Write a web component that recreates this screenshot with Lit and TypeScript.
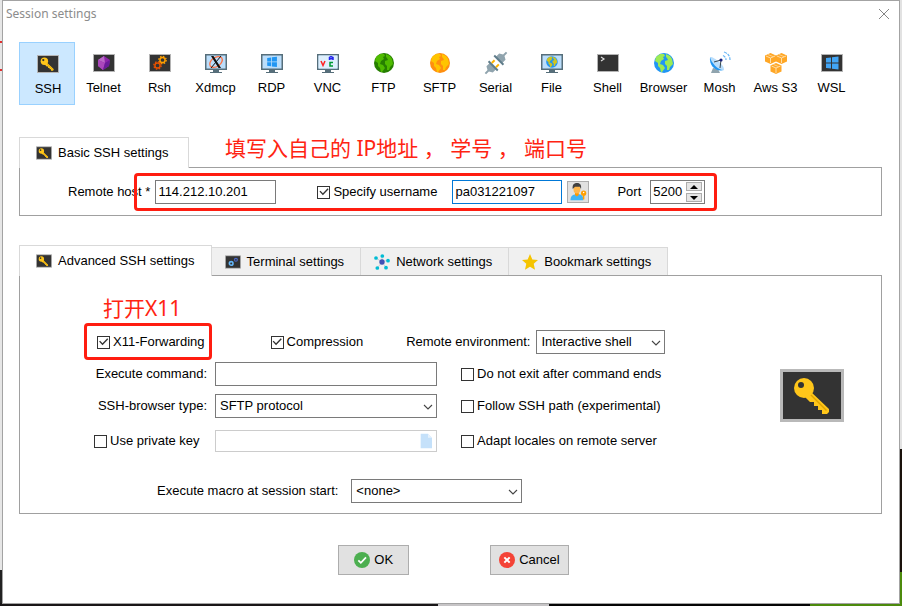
import { LitElement, html, css, svg } from "lit";
import { customElement, property, state } from "lit/decorators.js";
import { classMap } from "lit/directives/class-map.js";

const keyShape = svg`
  <path fill="#ffc61a" d="M29 21 L49 40 V43 L47 45 H42 V41 H38 V37 H34 V33 H30 L25 28 Z"/>
  <path fill="#e0a400" d="M30 24 L47 41 L46 42 L29 25 Z"/>
  <circle cx="24" cy="19" r="10" fill="#ffc61a"/>
  <circle cx="21" cy="16" r="3" fill="#333"/>`;

const tile = (inner: unknown) => svg`
  <rect x="1.5" y="3.5" width="21" height="17" fill="#333" stroke="#b4b4b4"/>${inner}`;

const monitor = (inner: unknown) => svg`
  <rect x="1" y="3" width="22" height="16" fill="#566e7a"/>
  <rect x="2.5" y="4.5" width="19" height="13" fill="#bbdefb"/>
  <path d="M9 19h6v2h3v1H6v-1h3z" fill="#566e7a"/>${inner}`;

const landmass = (fill: string) => svg`
  <path fill="${fill}" d="M4 6 L8 3 L12 3 L13 5 L11 6 L12 8 L9 10 L8 13 L11 14 L13 17 L10 21 L9 21 L8 17 L6 15 L6 12 L3 10 Z
  M14 3 L18 5 L20 8 L21 13 L18 16 L17 19 L15 19 L15 15 L13 13 L13 10 L16 9 L15 7 L14 6 Z"/>`;

const globe = (sea: string, land: string) => svg`
  <circle cx="12" cy="12" r="10" fill="${sea}"/>${landmass(land)}`;

const windowsLogo = (fill: string) => svg`
  <path fill="${fill}" d="M6 7 L11 6.400 V11.500 H6Z M12 6.200 L18.500 5.500 V11.500 H12Z M6 12.500 H11 V17.600 L6 17Z M12 12.500 H18.500 V18.500 L12 17.800Z"/>`;

const gear = (x: number, y: number, colour: string) => svg`
  <circle cx="${x}" cy="${y}" r="2.600" fill="none" stroke="${colour}" stroke-width="1.500"/>
  <circle cx="${x}" cy="${y}" r="3.700" fill="none" stroke="${colour}" stroke-width="1.300" stroke-dasharray="1.500 1.400"/>`;

const cube = (x: number, y: number) => svg`
  <g transform="translate(${x} ${y})">
    <path fill="#ffa726" d="M0 2.500 L5.500 0 L11 2.500 V8.500 L5.500 11 L0 8.500Z"/>
    <path fill="none" stroke="#ffe3b5" stroke-width="0.900" d="M1 3 L5.500 5 L10 3 M5.500 5 V10"/>
    <path fill="none" stroke="#ffe3b5" stroke-width="0.700" d="M3 1.500 L8 3.600"/>
  </g>`;

const icons: Record<string, unknown> = {
  ssh: tile(svg`<g transform="translate(-0.500 2.200) scale(0.370)">${keyShape}</g>`),
  telnet: tile(svg`
    <path fill="#8e24aa" d="M6 9 L12 5 L18 9 L17 15 L11 19 L6 15Z"/>
    <path fill="#ba68c8" d="M6 9 L12 5 L13 12Z"/>
    <path fill="#ab47bc" d="M6 9 L13 12 L11 19 L6 15Z"/>
    <path fill="#6a1b9a" d="M13 12 L18 9 L17 15 L11 19Z"/>`),
  rsh: tile(svg`${gear(14.5, 9, "#ffa000")}${gear(9.5, 14.5, "#e65100")}`),
  xdmcp: monitor(svg`
    <ellipse cx="12" cy="11" rx="7" ry="4.500" fill="none" stroke="#ff7043" stroke-width="1.300" transform="rotate(-35 12 11)"/>
    <path d="M7 5 H9.500 L17 17 H14.500Z" fill="#111"/>
    <path d="M17 5 L7 17" stroke="#111" stroke-width="1"/>`),
  rdp: monitor(svg`<g transform="translate(2.500 1.500) scale(0.780)">${windowsLogo("#2196f3")}</g>`),
  vnc: monitor(svg`
    <rect x="2.500" y="4.500" width="19" height="13" fill="#deeffd"/>
    <g fill="none" stroke-width="1.500">
      <path stroke="#f22" d="M5 10 L7 14.500 L9 10"/>
      <path stroke="#22e" d="M13.500 9 V6.500 L15 5.500 L17 6.500 V9 M13.500 7.800 H17"/>
      <path stroke="#093" d="M17 11.500 H14 V15 H17"/>
    </g>`),
  ftp: globe("#267f00", "#4fbb00"),
  sftp: globe("#ff8f0f", "#ffc400"),
  serial: svg`
    <g transform="rotate(-45 12 12)">
      <path fill="#90a4ae" d="M-3 11 H1 L3 7.500 H8 V16.500 H3 L1 13 H-3Z M27 11 H23 L21 7.500 H16 V16.500 H21 L23 13 H27Z"/>
      <path fill="#607d8b" d="M7 5.500 H9 V18.500 H7Z M15 5.500 H17 V18.500 H15Z"/>
      <path fill="#ffb300" d="M9 8 H13 V10 H9Z M9 14 H13 V16 H9Z"/>
    </g>`,
  file: monitor(svg`<g transform="translate(5 4) scale(0.580)">${globe("#2196f3", "#d0c420")}</g>`),
  shell: tile(svg`<path d="M5 6 L8 8 L5 10" fill="none" stroke="#ddd" stroke-width="1.200"/>`),
  browser: globe("#2196f3", "#9ceb54"),
  mosh: svg`
    <path fill="#90a4ae" d="M5 17 L3 22 H12 L10 18Z"/>
    <path fill="#2196f3" d="M2 6 C1 15 8 21 16 19Z"/>
    <path fill="#bbdefb" d="M2 6 C5 5 17 14 16 19 C11 20 3 12 2 6Z"/>
    <path d="M6 11 L13 9 M13 9 L12 17" stroke="#37474f" fill="none"/>
    <circle cx="13" cy="9" r="1.600" fill="#1a237e"/>
    <path d="M15 4.500 Q18 6 18 9 M16 1 Q22 3 22 9" stroke="#64b5f6" stroke-width="1.200" fill="none" stroke-dasharray="3 1"/>`,
  aws: svg`${cube(1, 2)}${cube(12, 2)}${cube(6.5, 12)}`,
  wsl: tile(windowsLogo("#42a5f5")),
  terminal: tile(svg`
    <circle cx="9.500" cy="14" r="2.500" fill="none" stroke="#64b5f6" stroke-width="2.200"/>
    <circle cx="16" cy="9" r="2" fill="none" stroke="#4a68c8" stroke-width="1.600"/>`),
  network: svg`
    <path d="M12 12 L3 6 M12 12 L12 3 M12 12 L21 9 M12 12 L18 20 M12 12 L5 21" stroke="#b0bec5"/>
    <circle cx="12" cy="12" r="4" fill="#3f51b5"/>
    <g fill="#00bcd4"><circle cx="3" cy="6" r="2.800"/><circle cx="12.500" cy="3" r="2.800"/><circle cx="21" cy="10" r="2.800"/><circle cx="18" cy="20.500" r="2.800"/><circle cx="5" cy="21" r="2.800"/></g>`,
  bookmark: svg`<path fill="#f5c400" d="M12 0 L15.500 8.200 L24 9 L17.600 14.800 L19.500 23.500 L12 19 L4.500 23.500 L6.400 14.800 L0 9 L8.500 8.200Z"/>`,
  user: svg`
    <path fill="#42b5f5" d="M2 23 C2 17 5 16 9 15 L14 15 C17 16 19 17 19 23Z"/>
    <path fill="#ff9800" d="M8 12 H13 V16 L10.500 18 L8 16Z"/>
    <ellipse cx="10.500" cy="8.500" rx="4.500" ry="5.500" fill="#ffb74d"/>
    <path fill="#424242" d="M5 8 C4 2 7 0 11 0 C15 0 17 3 16 8 L14.500 5 H8Z"/>
    <circle cx="19.500" cy="13.500" r="3.500" fill="#ffa000"/><path fill="#ffa000" d="M18.500 15 H20.500 V22 H18.500Z"/>
    <circle cx="19.500" cy="12.500" r="1" fill="#fff"/>`,
  ok: svg`<circle cx="12" cy="12" r="12" fill="#4caf50"/><path d="M6.500 12.500 L10.300 16.300 L18 8" fill="none" stroke="#fff" stroke-width="2.600"/>`,
  cancel: svg`<circle cx="12" cy="12" r="12" fill="#f44336"/><path d="M8 8 L16 16 M16 8 L8 16" stroke="#fff" stroke-width="3"/>`,
  page: svg`<path fill="#c5e1fa" d="M4 1 H15 L21 7 V23 H4Z"/><path fill="#e6f2fd" d="M15 1 L21 7 H15Z"/>`,
};

const icon = (name: string, size = 16, box = "0 0 24 24") => html`
  <svg width="${size}" height="${size}" viewBox="${box}" aria-hidden="true">${icons[name]}</svg>`;

/* Screen-shaped icons are cropped to their frame so that they fill the tab's icon slot. */
const tabIcon = (name: string) =>
  name === "ssh" || name === "terminal" ? icon(name, 16, "1 1 22 22") : icon(name);

@customElement("drop-down")
class DropDown extends LitElement {
  @property() label = "";
  @property() value = "";

  static styles = css`
    :host { display: block; position: relative; height: 24px; }
    select {
      appearance: none; width: 100%; height: 100%; box-sizing: border-box; display: block;
      border: 1px solid #7a7a7a; border-radius: 0; background: #fff; color: #000;
      padding: 0 20px 0 4px; font: 13px/20px "Liberation Sans", Arial, sans-serif;
    }
    svg { position: absolute; right: 4px; top: 8px; pointer-events: none; }
  `;

  render() {
    return html`
      <select aria-label=${this.label}><option>${this.value}</option></select>
      <svg width="10" height="10" viewBox="0 0 10 10" aria-hidden="true">
        <path d="M1 3 L5 7 L9 3" fill="none" stroke="#444" stroke-width="1.100"/>
      </svg>`;
  }
}

const sessions = [
  ["ssh", "SSH"], ["telnet", "Telnet"], ["rsh", "Rsh"], ["xdmcp", "Xdmcp"], ["rdp", "RDP"],
  ["vnc", "VNC"], ["ftp", "FTP"], ["sftp", "SFTP"], ["serial", "Serial"], ["file", "File"],
  ["shell", "Shell"], ["browser", "Browser"], ["mosh", "Mosh"], ["aws", "Aws S3"], ["wsl", "WSL"],
];

const advancedTabs = [
  ["ssh", "Advanced SSH settings"], ["terminal", "Terminal settings"],
  ["network", "Network settings"], ["bookmark", "Bookmark settings"],
];

@customElement("app-root")
class AppRoot extends LitElement {
  @state() private session = "ssh";

  static styles = css`
    :host {
      display: block; box-sizing: border-box; min-height: 100vh; padding: 0 2px 2px;
      font: 13px/16px "Liberation Sans", Arial, sans-serif; color: #000;
      background:
        linear-gradient(90deg, #191617 438px, #c6c4c6 438px 549px, #050505 549px 810px, #4c8a0c 810px) bottom / 100% 3px no-repeat,
        linear-gradient(#e6e6e6 0 41px, #e03030 41px 43px, #e6e6e6 43px 69px, #e03030 69px 71px, #e6e6e6 71px 570px, #222 570px) left / 2px 100% no-repeat,
        linear-gradient(#e2e2e2 449px, #1a120c 449px 572px, #4c8a0c 572px) right / 2px 100% no-repeat;
    }
    * { box-sizing: border-box; }
    svg { display: block; flex: none; }
    button, input { font: inherit; color: inherit; border-radius: 0; margin: 0; }
    button { padding: 0; }
    .window { background: #fff; border: 1px solid #a3a3a3; min-height: calc(100vh - 2px); }
    .titlebar {
      display: flex; justify-content: space-between; align-items: center; height: 26px; padding: 0 9px 0 3px;
      font: 12px/16px "Noto Sans", "Open Sans", sans-serif; color: #8c8c8c;
    }
    .title { font: inherit; margin: 0; }
    .close { border: 0; background: none; }
    .body { padding: 15px 17px 28px 16px; }
    .sessions { display: flex; margin-bottom: 32px; }
    .session {
      width: 56px; height: 63px; border: 1px solid transparent; background: none; white-space: nowrap;
      display: flex; flex-direction: column; align-items: center; gap: 5px; padding: 8px 0 0 1px;
    }
    .session.active { background: #cce8ff; border-color: #99d1ff; padding: 9px 0 0 2px; }
    .tabs { display: flex; align-items: flex-end; height: 31px; margin-bottom: -1px; position: relative; }
    .tab {
      height: 28px; margin-bottom: 1px; display: flex; align-items: center; gap: 6px; padding: 0 16px 0 13px;
      background: #f0f0f0; border: 1px solid #d9d9d9; border-width: 1px 1px 0 0;
    }
    .tab.active { height: 31px; min-width: 170px; margin-bottom: 0; padding: 0 16px; background: #fff; border-width: 1px 1px 0 1px; }
    .note {
      margin: 0; color: #ff2412; white-space: pre;
      font: 400 21px/24px "Noto Sans", "Noto Sans CJK SC", sans-serif;
    }
    .tabs .note { height: 32px; margin-left: 36px; }
    .panel { border: 1px solid #a0a0a0; }
    .row { display: flex; align-items: center; height: 24px; }
    .basic { padding: 12px 0 11px 48px; margin-bottom: 29px; }
    .marked { position: relative; display: flex; align-items: center; }
    .marked::after {
      content: ""; position: absolute; inset: -7px -12px -7px -16px;
      border: 3px solid #ff1d10; border-radius: 4px; pointer-events: none;
    }
    .marked.tight::after { inset: -11px -7px -10px -13px; }
    .field { height: 24px; border: 1px solid #7a7a7a; background: #fff; padding: 0 2px 1px; outline: 0; display: block; min-width: 0; }
    .field.focus { border-color: #0078d7; }
    .host-name { width: 121px; margin-left: 5px; }
    .user-name { width: 110px; margin: 0 5px 0 15px; }
    .check { display: flex; align-items: center; gap: 3px; white-space: nowrap; }
    .check input {
      appearance: none; width: 13px; height: 13px; flex: none; border: 1px solid #333; background: #fff;
      display: block;
    }
    .check input:checked::after {
      content: ""; display: block; width: 11px; height: 11px; background: #333;
      clip-path: polygon(10% 46%, 19% 38%, 41% 62%, 84% 16%, 93% 25%, 41% 80%);
    }
    .specify { margin-left: 41px; }
    .pick { width: 22px; height: 22px; border: 1px solid #adadad; background: #e1e1e1; display: grid; place-items: center; }
    .port-label { margin: 0 9px 0 28px; }
    .spinner { display: flex; align-items: center; width: 55px; height: 24px; border: 1px solid #7a7a7a; }
    .spinner input { appearance: textfield; border: 0; outline: 0; background: none; padding: 0 0 1px 2px; width: 35px; }
    .spinner input::-webkit-inner-spin-button { display: none; }
    .steps { display: grid; gap: 2px; }
    .steps button { width: 16px; height: 9px; border: 1px solid #adadad; background: #e6e6e6; display: grid; place-items: center; }
    .advanced { padding: 20px 0 10px; }
    .advanced .note { margin: 0 0 10px 83px; }
    .options { padding-left: 77px; margin-bottom: 8px; }
    .compression { margin: 0 43px 0 66px; }
    .environment { width: 129px; margin-left: 6px; }
    .middle { display: flex; justify-content: space-between; padding-right: 37px; }
    .form {
      display: grid; grid-template-columns: 195px 222px auto; grid-template-rows: 24px 24px 30px;
      gap: 8px 0; align-items: center;
    }
    .form > label:nth-child(3n + 1) { justify-self: end; margin-right: 8px; }
    .form > .check:nth-child(3n) { margin-left: 24px; }
    .form > .private { width: 113px; }
    .key-file { display: flex; align-items: center; justify-content: flex-end; height: 22px; border: 1px solid #ccc; padding-right: 2px; }
    .key-file input { flex: 1; min-width: 0; border: 0; background: none; }
    .preview { margin-top: 7px; }
    .macro { margin-top: 23px; padding-left: 137px; gap: 13px; }
    .macro drop-down { width: 171px; }
    .actions { display: flex; justify-content: center; gap: 81px; margin-top: 31px; padding-left: 6px; }
    .action {
      height: 30px; padding: 0 15px; border: 1px solid #adadad; background: #e1e1e1;
      display: flex; align-items: center; gap: 4px;
    }
    .action.slim { padding: 0 8px; }
  `;

  private check(label: string, checked = false, extra = "") {
    return html`<label class="check ${extra}"><input type="checkbox" .checked=${checked}>${label}</label>`;
  }

  render() {
    return html`
      <main class="window">
        <header class="titlebar">
          <h1 class="title">Session settings</h1>
          <button class="close" aria-label="Close">
            <svg width="12" height="12" viewBox="0 0 12 12"><path d="M1 1 L11 11 M11 1 L1 11" stroke="#858585"/></svg>
          </button>
        </header>
        <div class="body">
          <nav class="sessions">
            ${sessions.map(([id, name]) => html`
              <button class=${classMap({ session: true, active: id === this.session })}
                @click=${() => { this.session = id; }}>${icon(id, 24)}<span>${name}</span></button>`)}
          </nav>

          <div class="tabs">
            <button class="tab active">${tabIcon("ssh")}Basic SSH settings</button>
            <p class="note" lang="zh-CN">填写入自己的 IP地址 ， 学号 ， 端口号</p>
          </div>
          <section class="panel basic">
            <div class="row">
              <label for="host">Remote host *</label>
              <div class="marked">
                <input id="host" class="field host-name" value="114.212.10.201">
                ${this.check("Specify username", true, "specify")}
                <input class="field focus user-name" aria-label="Username" value="pa031221097">
                <button class="pick" aria-label="Choose user">${icon("user", 18)}</button>
                <label class="port-label" for="port">Port</label>
                <div class="spinner">
                  <input id="port" type="number" value="5200">
                  <div class="steps">
                    <button aria-label="Increase"><svg width="8" height="4" viewBox="0 0 8 4"><path d="M0 4 L4 0 L8 4Z"/></svg></button>
                    <button aria-label="Decrease"><svg width="8" height="4" viewBox="0 0 8 4"><path d="M0 0 L4 4 L8 0Z"/></svg></button>
                  </div>
                </div>
              </div>
            </div>
          </section>

          <div class="tabs">
            ${advancedTabs.map(([id, name], i) => html`
              <button class=${classMap({ tab: true, active: i === 0 })}>${tabIcon(id)}${name}</button>`)}
          </div>
          <section class="panel advanced">
            <p class="note" lang="zh-CN">打开X11</p>
            <div class="row options">
              <div class="marked tight">${this.check("X11-Forwarding", true)}</div>
              ${this.check("Compression", true, "compression")}
              <span>Remote environment:</span>
              <drop-down class="environment" label="Remote environment" value="Interactive shell"></drop-down>
            </div>
            <div class="middle">
              <div class="form">
                <label for="command">Execute command:</label>
                <input id="command" class="field">
                ${this.check("Do not exit after command ends")}
                <label>SSH-browser type:</label>
                <drop-down label="SSH-browser type" value="SFTP protocol"></drop-down>
                ${this.check("Follow SSH path (experimental)")}
                ${this.check("Use private key", false, "private")}
                <div class="key-file"><input aria-label="Private key file" disabled>${icon("page")}</div>
                ${this.check("Adapt locales on remote server")}
              </div>
              <svg class="preview" width="64" height="53" viewBox="0 0 64 53" aria-hidden="true">
                <rect x="1.500" y="1.500" width="61" height="50" fill="#333" stroke="#b9b9b9" stroke-width="3"/>
                ${keyShape}
              </svg>
            </div>
            <div class="row macro">
              <span>Execute macro at session start:</span>
              <drop-down label="Execute macro at session start" value="<none>"></drop-down>
            </div>
          </section>

          <footer class="actions">
            <button class="action">${icon("ok")}OK</button>
            <button class="action slim">${icon("cancel")}Cancel</button>
          </footer>
        </div>
      </main>`;
  }
}
